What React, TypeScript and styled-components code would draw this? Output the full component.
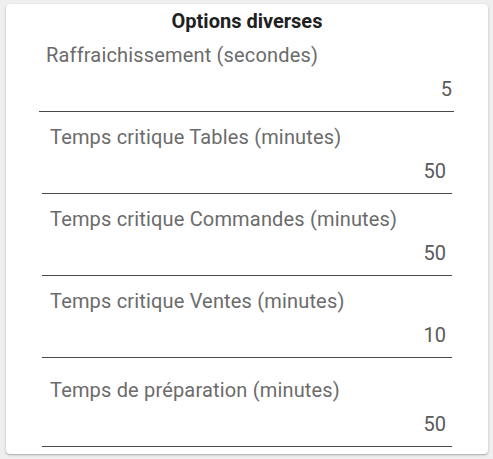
import styled, { createGlobalStyle } from "styled-components";

const GlobalStyle = createGlobalStyle`
	body {
		margin: 0;
		background: #efefef;
		font-family: Roboto, "Liberation Sans", sans-serif;
	}
`;

/* page */
const Page = styled.div`
	padding: 4px 5px 5px 6px;
`;

/* card */
const Card = styled.section`
	background: #fff;
	border-radius: 4px;
	box-shadow: 0 1px 3px rgba(0, 0, 0, 0.2), 0 1px 1px rgba(0, 0, 0, 0.12);
	padding: 5px 0 7px;
	display: flex;
	flex-direction: column;
`;

const Title = styled.h2`
	margin: 0;
	text-align: center;
	font-size: 20px;
	line-height: 24px;
	font-weight: 700;
	color: #212121;
`;

/* one input field */
interface Fieldable {
	$top: number;
	$wide?: boolean;
}
const Field = styled.label<Fieldable>`
	display: flex;
	flex-direction: column;
	gap: 10px;
	margin: ${(p) => p.$top}px ${(p) => (p.$wide ? 34 : 36)}px 0
		${(p) => (p.$wide ? 33 : 36)}px;
	padding: 0 ${(p) => (p.$wide ? 2 : 6)}px 10px ${(p) => (p.$wide ? 7 : 8)}px;
	border-bottom: 1px solid #4a4a4a;
`;

const Label = styled.span`
	font-size: 20px;
	line-height: 24px;
	letter-spacing: 0.17px;
	color: #6b6b6b;
	white-space: nowrap;
`;

const Value = styled.span`
	font-size: 20px;
	line-height: 24px;
	color: #5a5a5a;
	text-align: right;
`;

const fields = [
	{ label: "Raffraichissement (secondes)", value: "5", top: 10, wide: true },
	{ label: "Temps critique Tables (minutes)", value: "50", top: 13 },
	{ label: "Temps critique Commandes (minutes)", value: "50", top: 13 },
	{ label: "Temps critique Ventes (minutes)", value: "10", top: 13 },
	{ label: "Temps de préparation (minutes)", value: "50", top: 20 },
];

export default function App() {
	return (
		<>
			<GlobalStyle />
			<Page>
				<Card>
					<Title>Options diverses</Title>
					{fields.map((f) => (
						<Field key={f.label} $top={f.top} $wide={f.wide}>
							<Label>{f.label}</Label>
							<Value>{f.value}</Value>
						</Field>
					))}
				</Card>
			</Page>
		</>
	);
}
